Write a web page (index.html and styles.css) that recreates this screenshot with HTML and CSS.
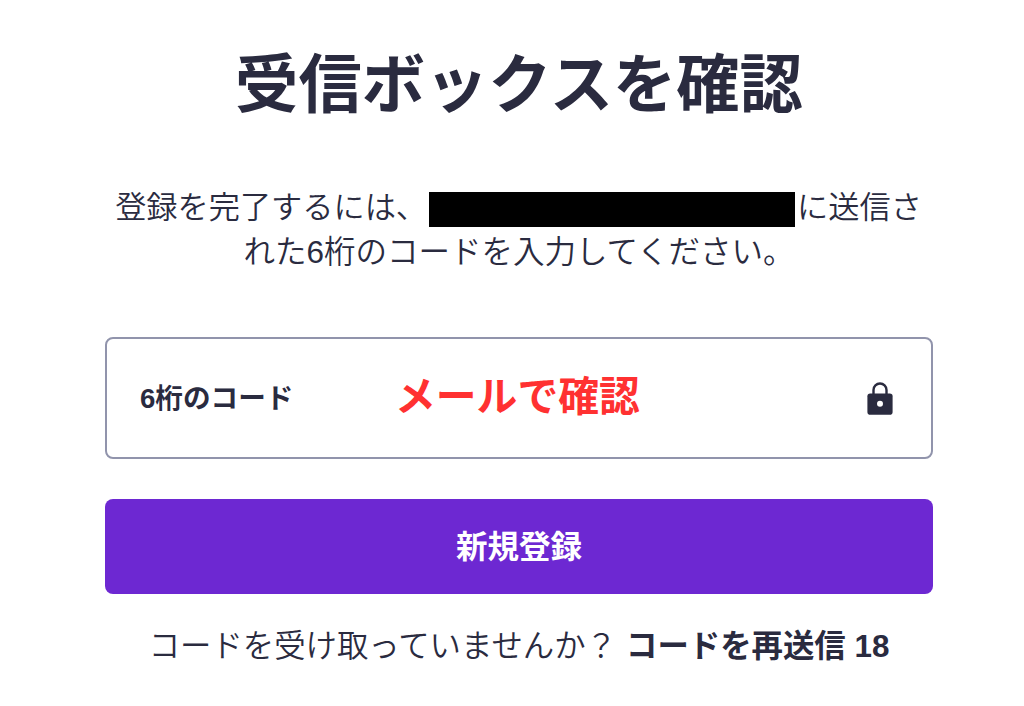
FILE: index.html
```html
<!DOCTYPE html>
<html lang="ja">
<head>
    <meta charset="UTF-8">
    <meta name="viewport" content="width=device-width, initial-scale=1.0">
    <title>受信ボックスを確認</title>
    <link rel="stylesheet" href="styles.css">
</head>
<body>
    <main class="verify">
        <h1>受信ボックスを確認</h1>
        <p class="message">
            <span class="line"><span>登録を完了するには、</span><span class="masked"></span><span>に送信さ</span></span>
            <span class="line">れた6桁のコードを入力してください。</span>
        </p>
        <form class="verify-form">
            <label class="code-field">
                <span class="code-label">6桁のコード</span>
                <span class="note">メールで確認</span>
                <svg class="lock" viewBox="0 0 26 33" width="26" height="33">
                    <path d="M6.5 13V8a6.5 6.5 0 0 1 13 0v5" fill="none" stroke="currentColor" stroke-width="2.4"/>
                    <rect x="0.4" y="11.4" width="25.2" height="21.3" rx="2.8" fill="currentColor"/>
                    <circle cx="13" cy="21.8" r="3" fill="#fff"/>
                </svg>
            </label>
            <button type="button" class="submit">新規登録</button>
        </form>
        <p class="resend">
            <span>コードを受け取っていませんか？</span>
            <span class="resend-link">コードを再送信 18</span>
        </p>
    </main>
</body>
</html>
```
FILE: styles.css
```css
* {
    box-sizing: border-box;
}

body {
    margin: 0;
    background: #fff;
    color: #2a2b3f;
    font-family: "Liberation Sans", "Noto Sans CJK JP", sans-serif;
}

.verify {
    width: 828px;
    height: 706px;
    margin-left: 105px;
    padding-top: 45px;
}

h1 {
    margin: 0;
    font-size: 63.3px;
    line-height: 80px;
    font-weight: 700;
    text-align: center;
}

.message {
    margin: 61px 0 0;
    font-size: 31.2px;
    font-weight: 350;
    line-height: 44px;
}

.message .line {
    display: flex;
    align-items: center;
    justify-content: center;
    white-space: nowrap;
}

.message .line:first-child {
    padding-right: 1px;
}

.message .line + .line {
    font-size: 31.5px;
}

.masked {
    width: 366px;
    height: 35px;
    margin: 2px 2px 0 2px;
    background: #000;
}

.verify-form {
    margin-top: 63px;
}

.code-field {
    display: flex;
    align-items: center;
    height: 122px;
    padding: 0 38px 0 33px;
    border: 2px solid #9194ac;
    border-radius: 8px;
}

.code-label {
    width: 255px;
    padding-bottom: 4px;
    font-size: 27.6px;
    font-weight: 700;
}

.note {
    padding-bottom: 10px;
    color: #ff3131;
    font-size: 40.8px;
    font-weight: 700;
}

.lock {
    margin-left: auto;
}

.submit {
    display: block;
    width: 100%;
    height: 95px;
    margin-top: 40px;
    padding: 0 0 6px;
    border: none;
    border-radius: 8px;
    background: #6d28d2;
    color: #fff;
    font: inherit;
    font-size: 31.5px;
    font-weight: 700;
}

.resend {
    display: flex;
    align-items: center;
    justify-content: center;
    gap: 9px;
    margin: 31px 0 0;
    font-size: 31.4px;
    font-weight: 350;
    line-height: 44px;
    white-space: nowrap;
}

.resend-link {
    font-weight: 700;
}
```
